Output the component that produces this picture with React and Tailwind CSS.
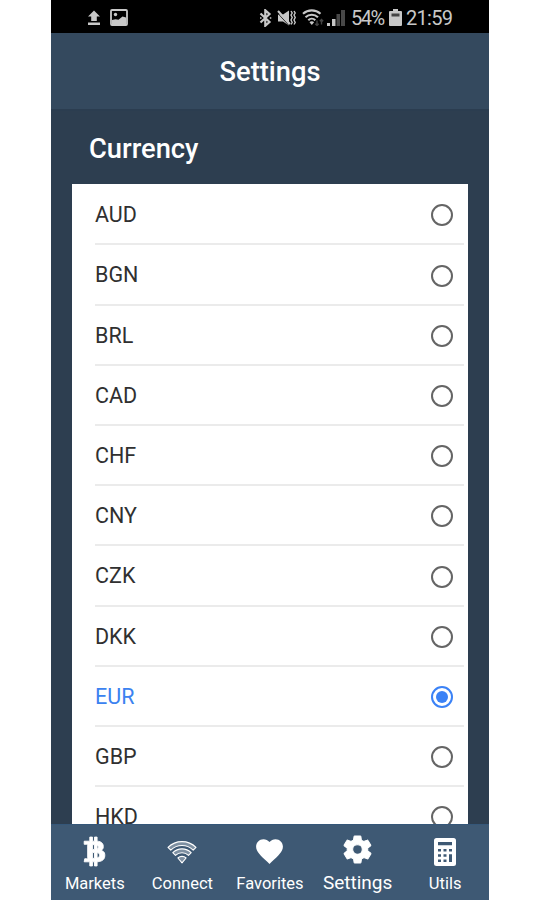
import { IoMdHeart, IoMdSettings, IoLogoBitcoin } from 'react-icons/io';

const currencies = ['AUD', 'BGN', 'BRL', 'CAD', 'CHF', 'CNY', 'CZK', 'DKK', 'EUR', 'GBP', 'HKD'];

function UploadIcon() {
  return (
    <svg width="14" height="16" viewBox="0 0 14 16" fill="currentColor">
      <path d="M7 .5 1 6.500h3.200V11h5.600V6.500H13zM1 12.600h12v2.400H1z" />
    </svg>
  );
}

function ImageIcon() {
  return (
    <svg width="18" height="17" viewBox="0 0 18 17">
      <rect x="1" y="1" width="16" height="15" rx="1" fill="none" stroke="currentColor" strokeWidth="1.800" />
      <path d="M2 11l3.500-.8 3 .6 4-3.300 3.500 1v7H2z" fill="currentColor" />
      <circle cx="5.500" cy="5.500" r="1.700" fill="currentColor" />
    </svg>
  );
}

function BluetoothIcon() {
  return (
    <svg width="13" height="18" viewBox="0 0 13 18" fill="none" stroke="currentColor">
      <path d="M1.500 4.500 10.500 13l-4.200 3.700V1.300L10.500 5l-9 8.500" strokeWidth="2.200" />
      <path d="M1 9h1.500M10.800 9h1.500" strokeWidth="1.600" />
    </svg>
  );
}

function MuteIcon() {
  return (
    <svg width="19" height="18" viewBox="0 0 19 18">
      <path d="M1 5.500h5l6-4v15l-6-4H1z" fill="currentColor" />
      <path d="M0 3.500l12 13" stroke="#000" strokeWidth="0.8" />
      <path d="M1 2l12 13" stroke="currentColor" strokeWidth="2" />
      <path d="M14 2l1.200 2L14 6l1.200 2.500L14 11l1.200 2.500-1.200 2M17 2l1.200 2L17 6l1.200 2.500L17 11l1.200 2.500-1.200 2" fill="none" stroke="currentColor" strokeWidth="1.400" />
    </svg>
  );
}

function StatusWifiIcon() {
  return (
    <svg width="22" height="17" viewBox="0 0 22 17" fill="none" stroke="currentColor">
      <path d="M1 4.800a13 13 0 0 1 17.500 0M3.500 8.200a9 9 0 0 1 12.500 0M6.300 11.200a5 5 0 0 1 7 0" strokeWidth="2.100" />
      <path d="M7.500 13.300a3 3 0 0 1 4.600 0L9.800 16z" fill="currentColor" stroke="none" />
      <path d="M15 11.500v5M13.300 14.700l1.700 1.800 1.700-1.800M19.500 15.500v-5M17.800 12.300l1.700-1.800 1.700 1.800" stroke="#444" strokeWidth="1.400" />
    </svg>
  );
}

function SignalIcon() {
  return (
    <svg width="18" height="17" viewBox="0 0 18 17">
      <path d="M0 14h3v3H0zM5 10h3.500v7H5z" fill="currentColor" />
      <path d="M9.500 5h3.500v12H9.500zM14 1h4v16h-4z" fill="#484848" />
    </svg>
  );
}

function BatteryIcon() {
  return (
    <svg width="13" height="17" viewBox="0 0 13 17">
      <path d="M4 0h5v2h3q1 0 1 1v13q0 1-1 1H1q-1 0-1-1V3q0-1 1-1h3z" fill="currentColor" />
      <path d="M2.500 4.500h8v3h-8z" fill="#444" />
    </svg>
  );
}

function WifiIcon() {
  return (
    <svg width="30" height="24" viewBox="0 0 30 24" fill="#ffffff55" stroke="white" strokeLinejoin="round" strokeWidth="1.100">
      <path d="M1 7.300a20 20 0 0 1 28 0l-2.800 2.800a16 16 0 0 0-22.400 0z" />
      <path d="M5.800 12.600a13.200 13.200 0 0 1 18.400 0l-2.700 2.700a9.400 9.400 0 0 0-13 0z" />
      <path d="M10.900 18a6 6 0 0 1 8.200 0L15 22.800z" />
    </svg>
  );
}

function CalculatorIcon() {
  return (
    <svg width="22" height="28" viewBox="0 0 22 28">
      <rect width="22" height="28" rx="2.500" fill="white" />
      <path d="M4 4h14v3.200H4zM4 11h3v2.500H4zM9.500 11h3v2.500h-3zM15 11h3v2.500h-3zM4 16.300h3v2.500H4zM9.500 16.300h3v2.500h-3zM4 21.500h3V24H4zM9.500 21.500h3V24h-3zM15 16.300h3V24h-3z" fill="#3e5974" />
    </svg>
  );
}

const tabs = [
  { label: 'Markets', icon: <IoLogoBitcoin className="h-[33px] w-[33px] text-white" strokeWidth="14" /> },
  { label: 'Connect', icon: <WifiIcon /> },
  { label: 'Favorites', icon: <IoMdHeart className="h-[33px] w-[33px] text-white" /> },
  { label: 'Settings', icon: <IoMdSettings className="h-[33px] w-[33px] text-white" strokeWidth="16" />, active: true },
  { label: 'Utils', icon: <CalculatorIcon /> },
];

function StatusBar() {
  return (
    <div className="flex h-[33px] shrink-0 items-center bg-black pl-[36px] pr-9 pt-[2px] text-[#c8c8c8]">
      <UploadIcon />
      <div className="ml-[9px]">
        <ImageIcon />
      </div>
      <div className="ml-auto flex items-center">
        <BluetoothIcon />
        <div className="ml-[5px]"><MuteIcon /></div>
        <div className="ml-[6px]"><StatusWifiIcon /></div>
        <div className="ml-[3px]"><SignalIcon /></div>
        <span className="ml-[6px] w-[34px] text-[20px] leading-7 tracking-[-1.5px] whitespace-nowrap">54%</span>
        <div className="ml-[4px]"><BatteryIcon /></div>
        <span className="ml-[4px] w-[47px] text-[20px] leading-7 tracking-[-0.7px] whitespace-nowrap">21:59</span>
      </div>
    </div>
  );
}

function CurrencyRow({ code, selected }) {
  return (
    <div className="ml-[23px] mr-1 flex h-[60.2px] shrink-0 items-center justify-between border-b-2 border-[#ebebeb] pr-[11px]">
      <span className={selected ? 'pt-[2px] text-[21.5px] text-[#3b82f0]' : 'pt-[2px] text-[21.5px] text-[#303030]'}>{code}</span>
      <span
        className={
          selected
            ? 'mt-[2px] flex h-[22px] w-[22px] items-center justify-center rounded-full border-2 border-[#3b82f6]'
            : 'mt-[2px] h-[22px] w-[22px] rounded-full border-2 border-[#656565]'
        }
      >
        {selected && <span className="h-3 w-3 rounded-full bg-[#3b82f6]" />}
      </span>
    </div>
  );
}

export default function App() {
  return (
    <div className="flex h-[900px] justify-center overflow-hidden bg-white font-['Roboto',sans-serif]">
      <div className="flex w-[438px] flex-col bg-[#2d3e50]">
        <StatusBar />
        <header className="flex h-[78px] shrink-0 items-center justify-center border-b-2 border-[#2b3d50] bg-[#34495e]">
          <h1 className="pt-[3px] text-[27.300px] font-medium text-white">Settings</h1>
        </header>

        <main className="flex min-h-0 flex-1 flex-col overflow-hidden px-[21px]">
          <h2 className="h-[73px] shrink-0 pl-[17px] pt-[18px] text-[27.300px] leading-10 font-medium text-white">Currency</h2>
          <div className="flex min-h-0 flex-1 flex-col overflow-hidden bg-white pt-[1.300px]">
            {currencies.map((code) => (
              <CurrencyRow key={code} code={code} selected={code === 'EUR'} />
            ))}
          </div>
        </main>

        <nav className="grid h-[76px] shrink-0 grid-cols-5 border-t border-[#355779] bg-[#3e5974]">
          {tabs.map((tab) => (
            <div key={tab.label} className="flex flex-col items-center">
              <div className={tab.active ? 'flex h-[48px] items-center' : 'flex h-[53px] items-center'}>{tab.icon}</div>
              <span className={tab.active ? 'mt-[-2px] text-[19px] leading-6 text-white' : 'mt-[-4px] text-[16.500px] leading-5 text-white'}>
                {tab.label}
              </span>
            </div>
          ))}
        </nav>
      </div>
    </div>
  );
}
